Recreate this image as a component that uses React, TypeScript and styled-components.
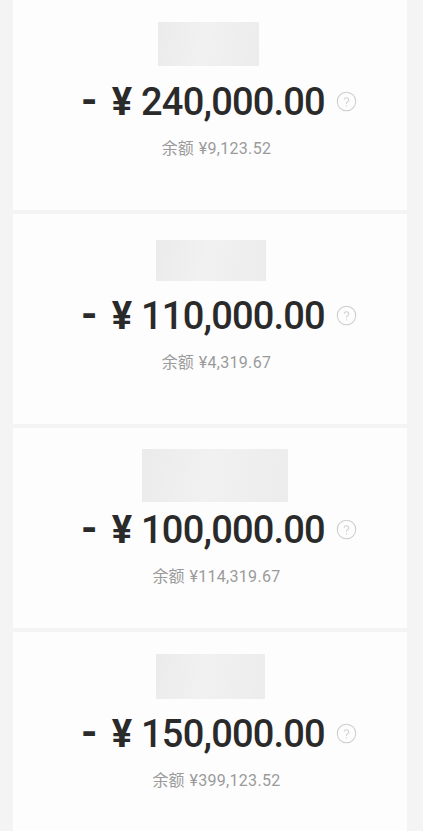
import React from "react";
import styled, { createGlobalStyle } from "styled-components";

const GlobalStyle = createGlobalStyle`
  html, body {
    margin: 0;
    padding: 0;
    background: #f4f4f4;
  }
  body {
    font-family: Roboto, "Noto Sans CJK SC", sans-serif;
  }
`;

const Page = styled.div`
  display: flex;
  flex-direction: column;
  gap: 4px;
  padding: 0 16px 0 13px;
  width: 423px;
  box-sizing: border-box;
`;

const Card = styled.div<{ $height: number }>`
  background: #fdfdfd;
  height: ${(p) => p.$height}px;
  box-sizing: border-box;
  padding: 22px 0 0 13px;
  display: flex;
  flex-direction: column;
  align-items: center;
  overflow: hidden;
`;

const NameSlot = styled.div`
  height: 44px;
  width: 100%;
  display: flex;
  justify-content: center;
  align-items: flex-start;
`;

const Redacted = styled.div<{ $w: number; $h: number; $top: number; $shift: number }>`
  width: ${(p) => p.$w}px;
  height: ${(p) => p.$h}px;
  margin-top: ${(p) => p.$top}px;
  margin-left: ${(p) => p.$shift * 2}px;
  flex-shrink: 0;
  background: linear-gradient(100deg, #ebebeb 0%, #f1f1f1 45%, #ececec 100%);
  filter: blur(0.6px);
`;

const AmountRow = styled.div`
  display: flex;
  align-items: baseline;
  margin: 13px 0 0 5px;
  line-height: 44px;
  color: #2a2a2a;
  font-family: Roboto, sans-serif;
`;

const Minus = styled.span`
  font-size: 42px;
  font-weight: 700;
  margin-right: 14px;
`;

const Yen = styled.span`
  font-size: 38px;
  font-weight: 700;
  margin-right: 9px;
`;

const Figure = styled.span`
  font-size: 38px;
  font-weight: 500;
  letter-spacing: -0.8px;
  font-variant-numeric: tabular-nums;
`;

const HelpIcon = styled.svg`
  width: 21px;
  height: 21px;
  margin-left: 11px;
  align-self: center;
  flex-shrink: 0;
`;

const Balance = styled.div`
  margin-top: 13px;
  display: flex;
  align-items: baseline;
  font-size: 16px;
  line-height: 20px;
  color: #9a9a9a;
`;

const BalanceLabel = styled.span`
  font-family: "Noto Sans CJK SC", sans-serif;
  margin-right: 5px;
`;

const BalanceValue = styled.span`
  font-family: Roboto, sans-serif;
  letter-spacing: 0.3px;
`;

const Help = () => (
  <HelpIcon viewBox="0 0 20 20" fill="none">
    <circle cx="10" cy="10" r="8.8" stroke="#cdcdcd" strokeWidth="1" />
    <path
      d="M7.8 7.9a2.3 2.3 0 0 1 4.4 0.6c0 1.5-2.2 1.7-2.2 3.1"
      stroke="#cdcdcd"
      strokeWidth="1"
      strokeLinecap="round"
    />
    <circle cx="10" cy="14.2" r="0.6" fill="#cdcdcd" />
  </HelpIcon>
);

type Item = {
  amount: string;
  balance: string;
  height: number;
  name: { w: number; h: number; top: number; shift: number };
};

const items: Item[] = [
  { amount: "240,000.00", balance: "9,123.52", height: 210, name: { w: 101, h: 44, top: 0, shift: -8 } },
  { amount: "110,000.00", balance: "4,319.67", height: 210, name: { w: 110, h: 41, top: 4, shift: -6 } },
  { amount: "100,000.00", balance: "114,319.67", height: 200, name: { w: 146, h: 53, top: -1, shift: -2 } },
  { amount: "150,000.00", balance: "399,123.52", height: 210, name: { w: 109, h: 45, top: 0, shift: -6 } },
];

export default function App() {
  return (
    <>
      <GlobalStyle />
      <Page>
        {items.map((it, i) => (
          <Card key={i} $height={it.height}>
            <NameSlot>
              <Redacted $w={it.name.w} $h={it.name.h} $top={it.name.top} $shift={it.name.shift} />
            </NameSlot>
            <AmountRow>
              <Minus>-</Minus>
              <Yen>¥</Yen>
              <Figure>{it.amount}</Figure>
              <Help />
            </AmountRow>
            <Balance>
              <BalanceLabel>余额</BalanceLabel>
              <BalanceValue>¥{it.balance}</BalanceValue>
            </Balance>
          </Card>
        ))}
      </Page>
    </>
  );
}
